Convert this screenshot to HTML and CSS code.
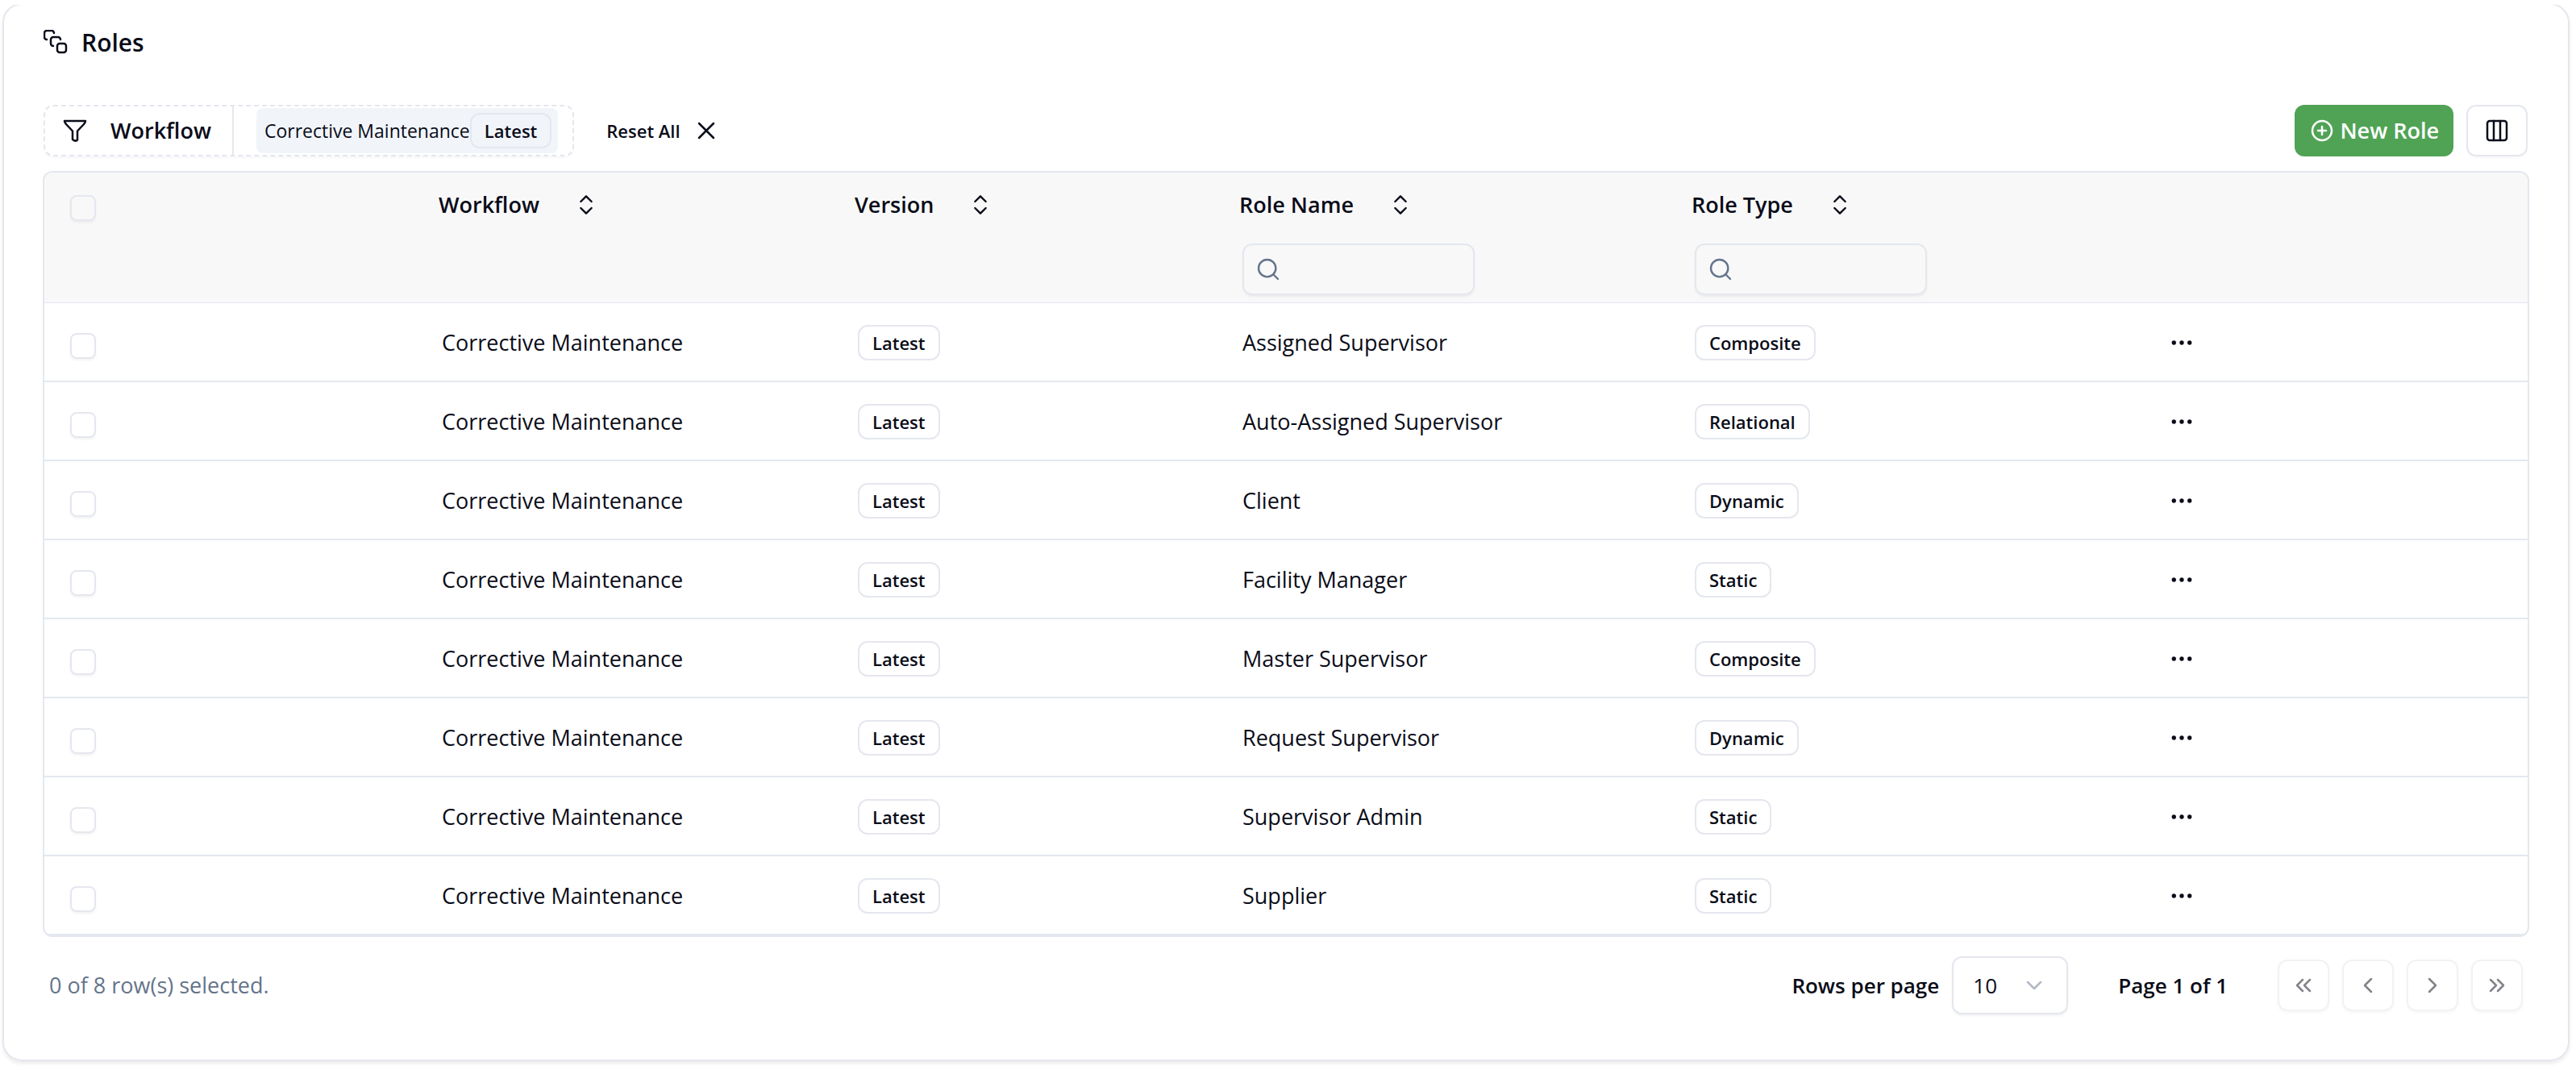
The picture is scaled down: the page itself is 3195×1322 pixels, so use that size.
FILE: index.html
```html
<!DOCTYPE html>
<html lang="en">
<head>
  <meta charset="UTF-8">
  <meta name="viewport" content="width=device-width, initial-scale=1.0">
  <title>Roles</title>
  <link rel="stylesheet" href="styles.css">
</head>
<body>
  <!-- shared icons -->
  <svg class="sprite" aria-hidden="true">
    <symbol id="icon-sort" viewBox="0 0 24 24"><path d="m7 15 5 5 5-5"/><path d="m7 9 5-5 5 5"/></symbol>
    <symbol id="icon-search" viewBox="0 0 24 24"><circle cx="11" cy="11" r="8"/><path d="m21 21-4.3-4.3"/></symbol>
    <symbol id="icon-dots" viewBox="0 0 24 24"><circle cx="4.7" cy="12" r="2"/><circle cx="12" cy="12" r="2"/><circle cx="19.3" cy="12" r="2"/></symbol>
  </svg>

  <main class="card">
    <header class="card-header">
      <svg class="icon" viewBox="1 1 32 32">
        <path d="M5 13a3 3 0 0 1-3-3V5a3 3 0 0 1 3-3h6a3 3 0 0 1 3 3"/>
        <path d="M13 21a3 3 0 0 1-3-3v-5a3 3 0 0 1 3-3h6a3 3 0 0 1 3 3"/>
        <rect x="18" y="18" width="11" height="11" rx="3"/>
      </svg>
      <h1>Roles</h1>
    </header>

    <div class="toolbar">
      <div class="filters">
        <button class="filter-button" type="button">
          <span class="filter-label">
            <svg class="icon" viewBox="0 0 32 32"><path d="M3 4h26c0 2-1 3-2 4l-8 8.500v11c-2 2.500-4 1-6-.5V16.500L5 8C4 7 3 6 3 4Z"/></svg>
            Workflow
          </span>
          <span class="filter-value">
            <span class="chip">Corrective Maintenance<span class="badge">Latest</span></span>
          </span>
        </button>
        <button class="reset-button" type="button">
          Reset All
          <svg class="icon" viewBox="0 0 32 32"><path d="M7 7l18 18M25 7L7 25"/></svg>
        </button>
      </div>
      <div class="actions">
        <button class="new-button" type="button">
          <svg class="icon" viewBox="0 0 32 32"><circle cx="16" cy="16" r="12"/><path d="M16 11v10M11 16h10"/></svg>
          New Role
        </button>
        <button class="columns-button" type="button" aria-label="Columns">
          <svg class="icon" viewBox="0 0 32 32"><rect x="4" y="4" width="24" height="24" rx="3"/><path d="M12 4v24M20 4v24"/></svg>
        </button>
      </div>
    </div>

    <div class="table-wrap">
      <table>
        <colgroup>
          <col class="col-select"><col class="col-workflow"><col class="col-version">
          <col class="col-name"><col class="col-type"><col class="col-actions"><col class="col-rest">
        </colgroup>
        <thead>
          <tr>
            <th><input class="checkbox" type="checkbox" aria-label="Select all"></th>
            <th><button class="sort" type="button">Workflow <svg class="icon"><use href="#icon-sort"/></svg></button></th>
            <th><button class="sort" type="button">Version <svg class="icon"><use href="#icon-sort"/></svg></button></th>
            <th>
              <button class="sort" type="button">Role Name <svg class="icon"><use href="#icon-sort"/></svg></button>
              <label class="search"><svg class="icon"><use href="#icon-search"/></svg><input type="text" aria-label="Search role name"></label>
            </th>
            <th>
              <button class="sort" type="button">Role Type <svg class="icon"><use href="#icon-sort"/></svg></button>
              <label class="search"><svg class="icon"><use href="#icon-search"/></svg><input type="text" aria-label="Search role type"></label>
            </th>
            <th></th>
            <th></th>
          </tr>
        </thead>
        <tbody>
          <tr>
            <td><input class="checkbox" type="checkbox" aria-label="Select row"></td>
            <td>Corrective Maintenance</td>
            <td><span class="badge">Latest</span></td>
            <td>Assigned Supervisor</td>
            <td><span class="badge">Composite</span></td>
            <td><button class="menu-button" type="button" aria-label="Open menu"><svg class="dots"><use href="#icon-dots"/></svg></button></td>
            <td></td>
          </tr>
          <tr>
            <td><input class="checkbox" type="checkbox" aria-label="Select row"></td>
            <td>Corrective Maintenance</td>
            <td><span class="badge">Latest</span></td>
            <td>Auto-Assigned Supervisor</td>
            <td><span class="badge">Relational</span></td>
            <td><button class="menu-button" type="button" aria-label="Open menu"><svg class="dots"><use href="#icon-dots"/></svg></button></td>
            <td></td>
          </tr>
          <tr>
            <td><input class="checkbox" type="checkbox" aria-label="Select row"></td>
            <td>Corrective Maintenance</td>
            <td><span class="badge">Latest</span></td>
            <td>Client</td>
            <td><span class="badge">Dynamic</span></td>
            <td><button class="menu-button" type="button" aria-label="Open menu"><svg class="dots"><use href="#icon-dots"/></svg></button></td>
            <td></td>
          </tr>
          <tr>
            <td><input class="checkbox" type="checkbox" aria-label="Select row"></td>
            <td>Corrective Maintenance</td>
            <td><span class="badge">Latest</span></td>
            <td>Facility Manager</td>
            <td><span class="badge">Static</span></td>
            <td><button class="menu-button" type="button" aria-label="Open menu"><svg class="dots"><use href="#icon-dots"/></svg></button></td>
            <td></td>
          </tr>
          <tr>
            <td><input class="checkbox" type="checkbox" aria-label="Select row"></td>
            <td>Corrective Maintenance</td>
            <td><span class="badge">Latest</span></td>
            <td>Master Supervisor</td>
            <td><span class="badge">Composite</span></td>
            <td><button class="menu-button" type="button" aria-label="Open menu"><svg class="dots"><use href="#icon-dots"/></svg></button></td>
            <td></td>
          </tr>
          <tr>
            <td><input class="checkbox" type="checkbox" aria-label="Select row"></td>
            <td>Corrective Maintenance</td>
            <td><span class="badge">Latest</span></td>
            <td>Request Supervisor</td>
            <td><span class="badge">Dynamic</span></td>
            <td><button class="menu-button" type="button" aria-label="Open menu"><svg class="dots"><use href="#icon-dots"/></svg></button></td>
            <td></td>
          </tr>
          <tr>
            <td><input class="checkbox" type="checkbox" aria-label="Select row"></td>
            <td>Corrective Maintenance</td>
            <td><span class="badge">Latest</span></td>
            <td>Supervisor Admin</td>
            <td><span class="badge">Static</span></td>
            <td><button class="menu-button" type="button" aria-label="Open menu"><svg class="dots"><use href="#icon-dots"/></svg></button></td>
            <td></td>
          </tr>
          <tr>
            <td><input class="checkbox" type="checkbox" aria-label="Select row"></td>
            <td>Corrective Maintenance</td>
            <td><span class="badge">Latest</span></td>
            <td>Supplier</td>
            <td><span class="badge">Static</span></td>
            <td><button class="menu-button" type="button" aria-label="Open menu"><svg class="dots"><use href="#icon-dots"/></svg></button></td>
            <td></td>
          </tr>
        </tbody>
      </table>
    </div>

    <footer class="table-footer">
      <div class="selected-count">0 of 8 row(s) selected.</div>
      <div class="pagination">
        <div class="page-size">
          <label for="page-size">Rows per page</label>
          <div class="select-wrap">
            <select id="page-size">
              <option>10</option>
              <option>20</option>
              <option>50</option>
            </select>
            <svg class="icon select-arrow" viewBox="0 0 32 32"><path d="M8 12l8 8 8-8"/></svg>
          </div>
        </div>
        <div class="page-info">Page 1 of 1</div>
        <div class="page-buttons">
          <button type="button" disabled aria-label="First page"><svg class="icon" viewBox="0 0 32 32"><path d="M15 9l-7 7 7 7M24 9l-7 7 7 7"/></svg></button>
          <button type="button" disabled aria-label="Previous page"><svg class="icon" viewBox="0 0 32 32"><path d="M20 8l-8 8 8 8"/></svg></button>
          <button type="button" disabled aria-label="Next page"><svg class="icon" viewBox="0 0 32 32"><path d="M12 8l8 8-8 8"/></svg></button>
          <button type="button" disabled aria-label="Last page"><svg class="icon" viewBox="0 0 32 32"><path d="M8 9l7 7-7 7M17 9l7 7-7 7"/></svg></button>
        </div>
      </div>
    </footer>
  </main>
</body>
</html>
```
FILE: styles.css
```css
* {
  box-sizing: border-box;
}
body {
  margin: 0;
  padding: 4px 8px 6px 3px;
  background: #fff;
  color: #0a0c18;
  font-family: "Segoe UI", "Open Sans", "Noto Sans", sans-serif;
  font-size: 27px;
  line-height: 40px;
}
button, input, select {
  font: inherit;
  color: inherit;
}
button {
  display: flex;
  align-items: center;
  padding: 0;
  border: none;
  background: none;
  font-weight: 600;
  cursor: pointer;
}
.sprite {
  display: none;
}
.icon {
  width: 32px;
  height: 32px;
  flex-shrink: 0;
  fill: none;
  stroke: currentColor;
  stroke-width: 2.5;
  stroke-linecap: round;
  stroke-linejoin: round;
}
/* the card has no visible top edge, only the rounded sides */
.card {
  padding: 24px 48px 56px;
  border: 2px solid #e4e7ee;
  border-radius: 24px;
  box-shadow: 0 3px 4px rgba(0, 0, 0, 0.08);
  clip-path: inset(2px -8px -8px -8px);
}
.card-header {
  display: flex;
  align-items: center;
  gap: 15px;
  height: 46px;
  margin-bottom: 54px;
  padding-left: 1px;
}
.card-header h1 {
  margin: 0;
  font-size: 30px;
  font-weight: 600;
}

/* toolbar */
.toolbar {
  display: flex;
  justify-content: space-between;
  margin-bottom: 18px;
  padding: 0 2px 0 1px;
}
.filters {
  display: flex;
  gap: 40px;
}
.filter-button {
  height: 64px;
  border: 2px dashed #e4e7ee;
  border-radius: 12px;
  box-shadow: 0 2px 2px rgba(0, 0, 0, 0.03);
}
.filter-label {
  display: flex;
  align-items: center;
  gap: 28px;
  height: 100%;
  padding: 0 26px 0 21px;
  border-right: 2px solid #e4e7ee;
}
.filter-value {
  padding: 0 18px 0 28px;
}
.chip {
  display: flex;
  align-items: center;
  height: 56px;
  padding: 0 8px 0 10px;
  border-radius: 8px;
  background: #f1f5fa;
  font-size: 23px;
  font-weight: 400;
}
.badge {
  display: inline-flex;
  align-items: center;
  height: 44px;
  padding: 0 16px;
  border: 2px solid #e4e7ee;
  border-radius: 12px;
  font-size: 22px;
  font-weight: 600;
  vertical-align: middle;
}
.reset-button {
  gap: 16px;
  font-size: 22px;
}
.actions {
  display: flex;
  gap: 16px;
}
.new-button {
  gap: 6px;
  height: 64px;
  padding: 0 18px;
  border-radius: 12px;
  background: #50a355;
  color: #fff;
}
.columns-button {
  justify-content: center;
  width: 76px;
  height: 64px;
  border: 2px solid #e4e7ee;
  border-radius: 12px;
  box-shadow: 0 2px 2px rgba(0, 0, 0, 0.03);
}

/* table */
.table-wrap {
  overflow: hidden;
  border: 2px solid #e4e7ee;
  border-radius: 12px;
}
table {
  width: 100%;
  table-layout: fixed;
  border-collapse: separate;
  border-spacing: 0;
}
.col-select { width: 477px; }
.col-workflow { width: 516px; }
.col-version { width: 477px; }
.col-name { width: 561px; }
.col-type { width: 572px; }
.col-actions { width: 160px; }
.col-rest { width: 317px; }
th {
  height: 162px;
  padding: 20px 12px 8px;
  border-bottom: 1px solid #e4e7ee;
  background: #f8f8f8;
  text-align: left;
  vertical-align: top;
}
td {
  height: 98px;
  padding: 1px 16px 0;
  border-bottom: 2px solid #e4e7ee;
}
th:first-child,
td:first-child {
  padding-left: 32px;
}
.checkbox {
  display: block;
  appearance: none;
  width: 32px;
  height: 32px;
  margin: 8px 0 0;
  border: 2px solid #e4e7ee;
  border-radius: 8px;
  box-shadow: 0 2px 3px rgba(0, 0, 0, 0.05);
}
.sort {
  gap: 42px;
}
.sort .icon,
.search .icon {
  stroke-width: 1.8;
}
.search {
  display: flex;
  align-items: center;
  width: 288px;
  height: 64px;
  margin: 28px 0 0 4px;
  padding: 0 14px;
  border: 2px solid #e4e7ee;
  border-radius: 12px;
  box-shadow: 0 2px 3px rgba(0, 0, 0, 0.05);
  color: #64748b;
}
.search input {
  width: 100%;
  margin-left: 12px;
  padding: 0;
  border: none;
  outline: none;
  background: transparent;
}
.menu-button {
  justify-content: center;
  width: 64px;
  height: 64px;
}
.dots {
  width: 32px;
  height: 32px;
  fill: currentColor;
}

/* footer */
.table-footer {
  display: flex;
  align-items: center;
  justify-content: space-between;
  padding: 24px 8px 0;
}
.selected-count {
  color: #64748b;
}
.pagination {
  display: flex;
  align-items: center;
  gap: 62px;
  font-size: 26px;
  font-weight: 600;
}
.page-size {
  display: flex;
  align-items: center;
  gap: 16px;
}
.select-wrap {
  position: relative;
}
.select-wrap select {
  display: block;
  appearance: none;
  width: 144px;
  height: 72px;
  padding: 0 24px;
  border: 2px solid #e4e7ee;
  border-radius: 12px;
  background: transparent;
  box-shadow: 0 2px 3px rgba(0, 0, 0, 0.05);
  font-weight: 400;
}
.select-arrow {
  position: absolute;
  top: 20px;
  right: 26px;
  color: #b4b8c5;
  pointer-events: none;
}
.page-buttons {
  display: flex;
  gap: 16px;
}
.page-buttons button {
  justify-content: center;
  width: 64px;
  height: 64px;
  border: 2px solid #e4e7ee;
  border-radius: 12px;
  box-shadow: 0 2px 3px rgba(0, 0, 0, 0.05);
  opacity: 0.5;
}
```
